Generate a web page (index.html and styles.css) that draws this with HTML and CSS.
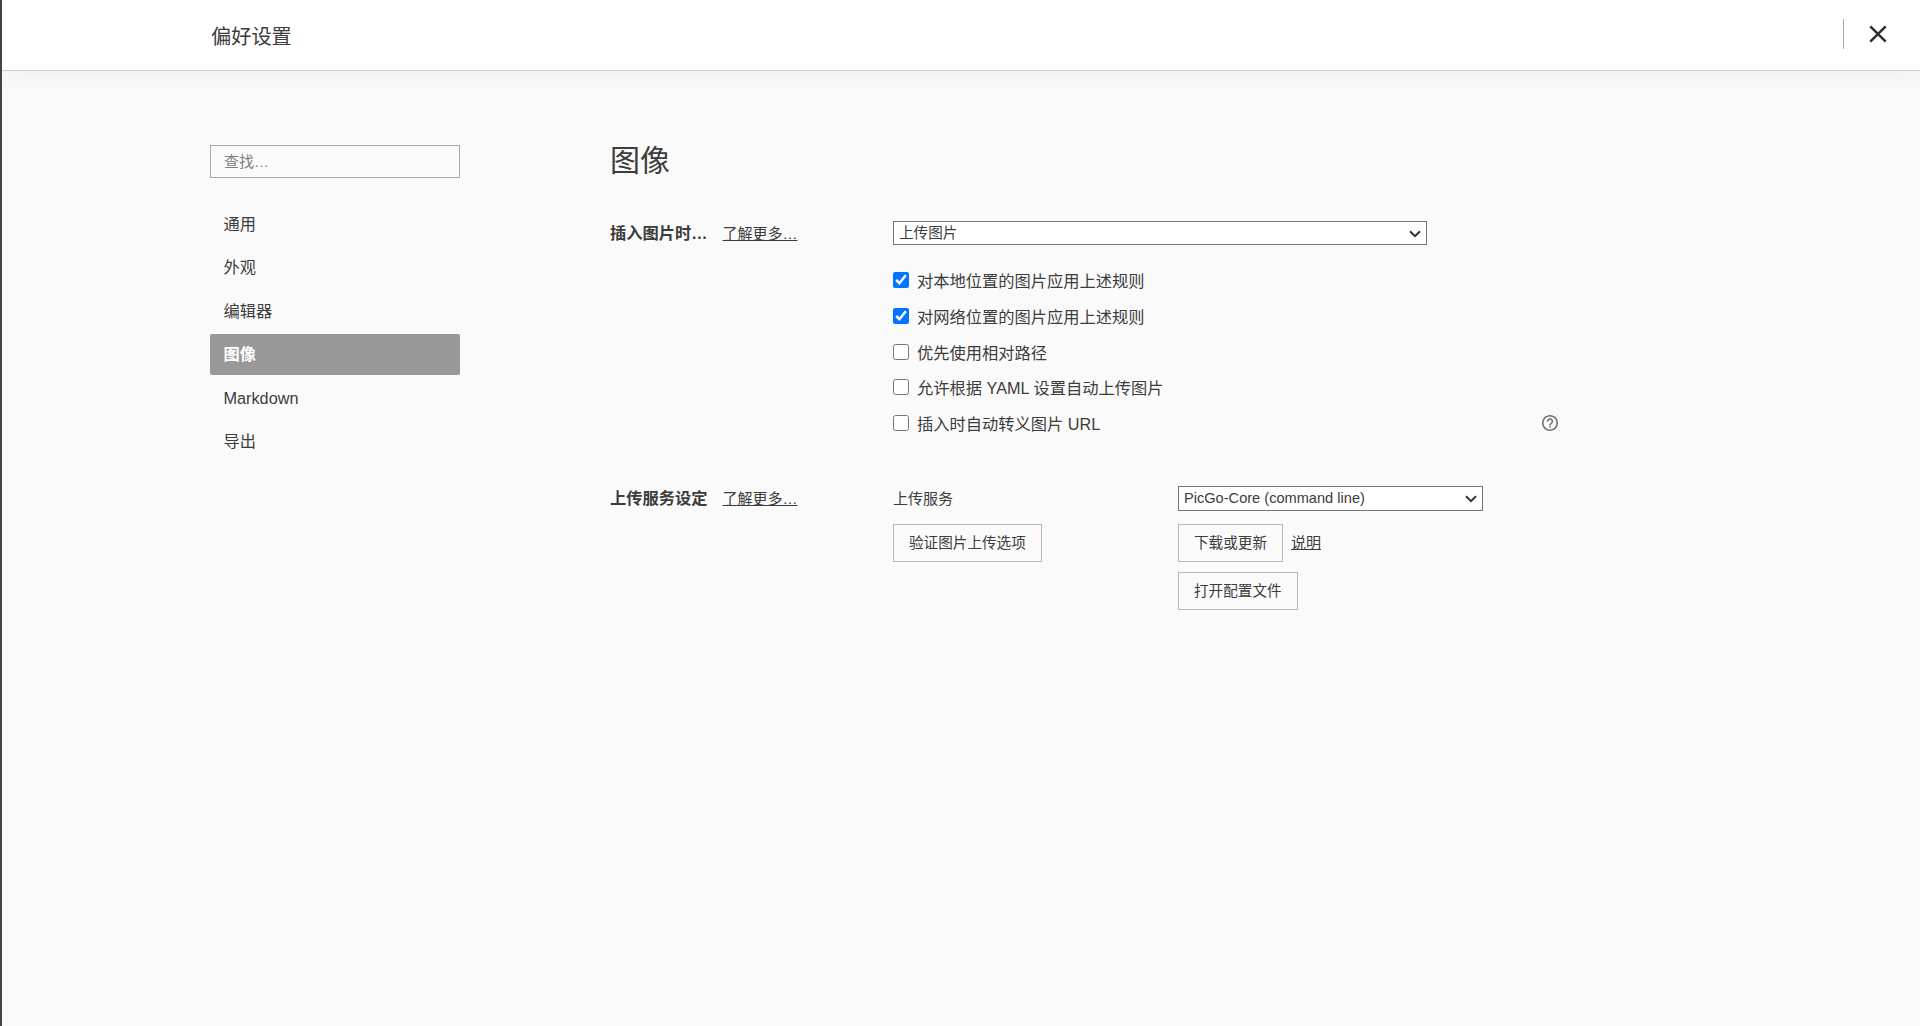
FILE: index.html
```html
<!DOCTYPE html>
<html lang="zh-CN">

<head>
    <meta charset="UTF-8">
    <meta name="viewport" content="width=device-width, initial-scale=1.0">
    <title>偏好设置</title>
    <link rel="stylesheet" href="styles.css">
</head>

<body>

    <header class="header">
        <h1 class="header-title">偏好设置</h1>
        <div class="header-actions">
            <button class="close-btn" aria-label="关闭">
                <svg width="18" height="18" viewBox="0 0 18 18">
                    <path d="M1.3 1.3 L16.7 16.7 M16.7 1.3 L1.3 16.7" />
                </svg>
            </button>
        </div>
    </header>

    <div class="container">
        <nav class="sidebar">
            <input class="search" type="text" placeholder="查找…">
            <ul class="menu">
                <li class="menu-item">通用</li>
                <li class="menu-item">外观</li>
                <li class="menu-item">编辑器</li>
                <li class="menu-item active">图像</li>
                <li class="menu-item">Markdown</li>
                <li class="menu-item">导出</li>
            </ul>
        </nav>

        <main class="content">
            <h2 class="page-title">图像</h2>

            <section class="group">
                <div class="group-label">
                    <strong>插入图片时…</strong>
                    <a class="more" href="#">了解更多…</a>
                </div>
                <div class="group-body">
                    <div class="select-wrap insert-select">
                        <select class="select">
                            <option>上传图片</option>
                        </select>
                        <svg class="arrow" width="12" height="8" viewBox="0 0 12 8">
                            <path d="M1 1.2 L6 6.2 L11 1.2" />
                        </svg>
                    </div>
                    <div class="options">
                        <label class="option"><input type="checkbox" checked><span>对本地位置的图片应用上述规则</span></label>
                        <label class="option"><input type="checkbox" checked><span>对网络位置的图片应用上述规则</span></label>
                        <label class="option"><input type="checkbox"><span>优先使用相对路径</span></label>
                        <label class="option"><input type="checkbox"><span>允许根据 YAML 设置自动上传图片</span></label>
                        <label class="option">
                            <input type="checkbox"><span>插入时自动转义图片 URL</span>
                            <svg class="help" width="16" height="16" viewBox="2 2 20 20">
                                <path d="M11 18h2v-2h-2v2zm1-16C6.48 2 2 6.48 2 12s4.48 10 10 10 10-4.48 10-10S17.52 2 12 2zm0 18c-4.41 0-8-3.59-8-8s3.59-8 8-8 8 3.59 8 8-3.59 8-8 8zm0-14c-2.21 0-4 1.79-4 4h2c0-1.1.9-2 2-2s2 .9 2 2c0 2-3 1.75-3 5h2c0-2.25 3-2.5 3-5 0-2.21-1.79-4-4-4z" />
                            </svg>
                        </label>
                    </div>
                </div>
            </section>

            <section class="group">
                <div class="group-label">
                    <strong>上传服务设定</strong>
                    <a class="more" href="#">了解更多…</a>
                </div>
                <div class="group-body service">
                    <div class="service-left">
                        <div class="service-name">上传服务</div>
                        <button class="btn">验证图片上传选项</button>
                    </div>
                    <div class="service-right">
                        <div class="select-wrap service-select">
                            <select class="select">
                                <option>PicGo-Core (command line)</option>
                            </select>
                            <svg class="arrow" width="12" height="8" viewBox="0 0 12 8">
                                <path d="M1 1.2 L6 6.2 L11 1.2" />
                            </svg>
                        </div>
                        <div class="btn-row">
                            <button class="btn">下载或更新</button>
                            <a class="doc-link" href="#">说明</a>
                        </div>
                        <button class="btn">打开配置文件</button>
                    </div>
                </div>
            </section>
        </main>
    </div>

</body>

</html>
```
FILE: styles.css
```css
* {
    box-sizing: border-box;
}

body {
    margin: 0;
    min-height: 100vh;
    border-left: 2px solid #444;
    background-color: #fafafa;
    color: #3c3c3c;
    font-family: "Liberation Sans", "Noto Sans CJK SC", sans-serif;
    font-size: 16.25px;
}

input,
select,
button {
    font-family: inherit;
    color: inherit;
}

a {
    color: inherit;
    text-underline-offset: 1px;
}

.header {
    display: flex;
    justify-content: space-between;
    height: 71px;
    padding: 0 33px 0 209px;
    background-color: #fff;
    border-bottom: 1px solid #ccc;
    box-shadow: 0 2px 30px rgba(0, 0, 0, 0.055);
}

.header-title {
    margin: 0;
    font-size: 20.2px;
    font-weight: normal;
    line-height: 74px;
}

.header-actions {
    height: 30px;
    margin-top: 19px;
    padding-left: 25px;
    border-left: 1px solid #aaa;
}

.close-btn {
    display: block;
    margin-top: 6px;
    padding: 0;
    border: none;
    background: none;
}

.close-btn svg {
    display: block;
    fill: none;
    stroke: #2d2d33;
    stroke-width: 2.5;
}

.container {
    display: flex;
    padding: 74px 0 0 208px;
}

.sidebar {
    width: 250px;
    margin-right: 150px;
}

.search {
    display: block;
    width: 250px;
    height: 33px;
    padding: 0 13px;
    border: 1px solid #a9a9a9;
    background: none;
    font-size: 15px;
}

.search::placeholder {
    color: #808080;
}

.menu {
    margin: 26px 0 0;
    padding: 0;
    list-style: none;
}

.menu-item {
    height: 41px;
    margin-bottom: 2.4px;
    padding-left: 13.5px;
    border-radius: 2px;
    line-height: 41px;
}

.menu-item.active {
    background-color: #999;
    color: #fff;
    font-weight: bold;
}

.content {
    width: 950px;
}

.page-title {
    margin: -6px 0 38px;
    font-size: 30px;
    font-weight: normal;
    line-height: 44px;
}

.group {
    display: flex;
}

.group-label {
    display: flex;
    width: 283px;
    line-height: 25px;
}

.group-label strong {
    width: 112.5px;
}

.more {
    font-size: 15px;
    line-height: 26px;
}

.group-body {
    flex: 1;
}

.select-wrap {
    position: relative;
}

.select {
    display: block;
    width: 100%;
    height: 100%;
    padding: 0 0 0 5px;
    border: 1px solid #767676;
    border-radius: 0;
    background-color: #fff;
    font-size: 14.6px;
    appearance: none;
}

.arrow {
    position: absolute;
    top: 9px;
    right: 6px;
    fill: none;
    stroke: #333;
    stroke-width: 2;
    pointer-events: none;
}

.insert-select {
    width: 534px;
    height: 24px;
}

.options {
    margin: 18.3px 0 43.9px;
}

.option {
    display: flex;
    align-items: center;
    height: 35.75px;
}

.option input {
    width: 16px;
    height: 16px;
    margin: 0 8px 2px 0;
}

.option span {
    margin-bottom: 2px;
}

.help {
    margin: 0 2px 2px auto;
    fill: #707070;
}

.service {
    display: flex;
}

.service-left {
    width: 285px;
}

.service-name {
    height: 38px;
    font-size: 15px;
    line-height: 26px;
}

.service-select {
    width: 305px;
    height: 25px;
    margin-bottom: 13px;
}

.btn {
    height: 38px;
    padding: 0 15px 2px;
    border: 1px solid #b8b8b8;
    background: none;
    font-size: 14.6px;
}

.btn-row {
    display: flex;
    align-items: center;
    margin-bottom: 10px;
}

.doc-link {
    margin: 0 0 2px 8px;
    font-size: 15px;
}
```
